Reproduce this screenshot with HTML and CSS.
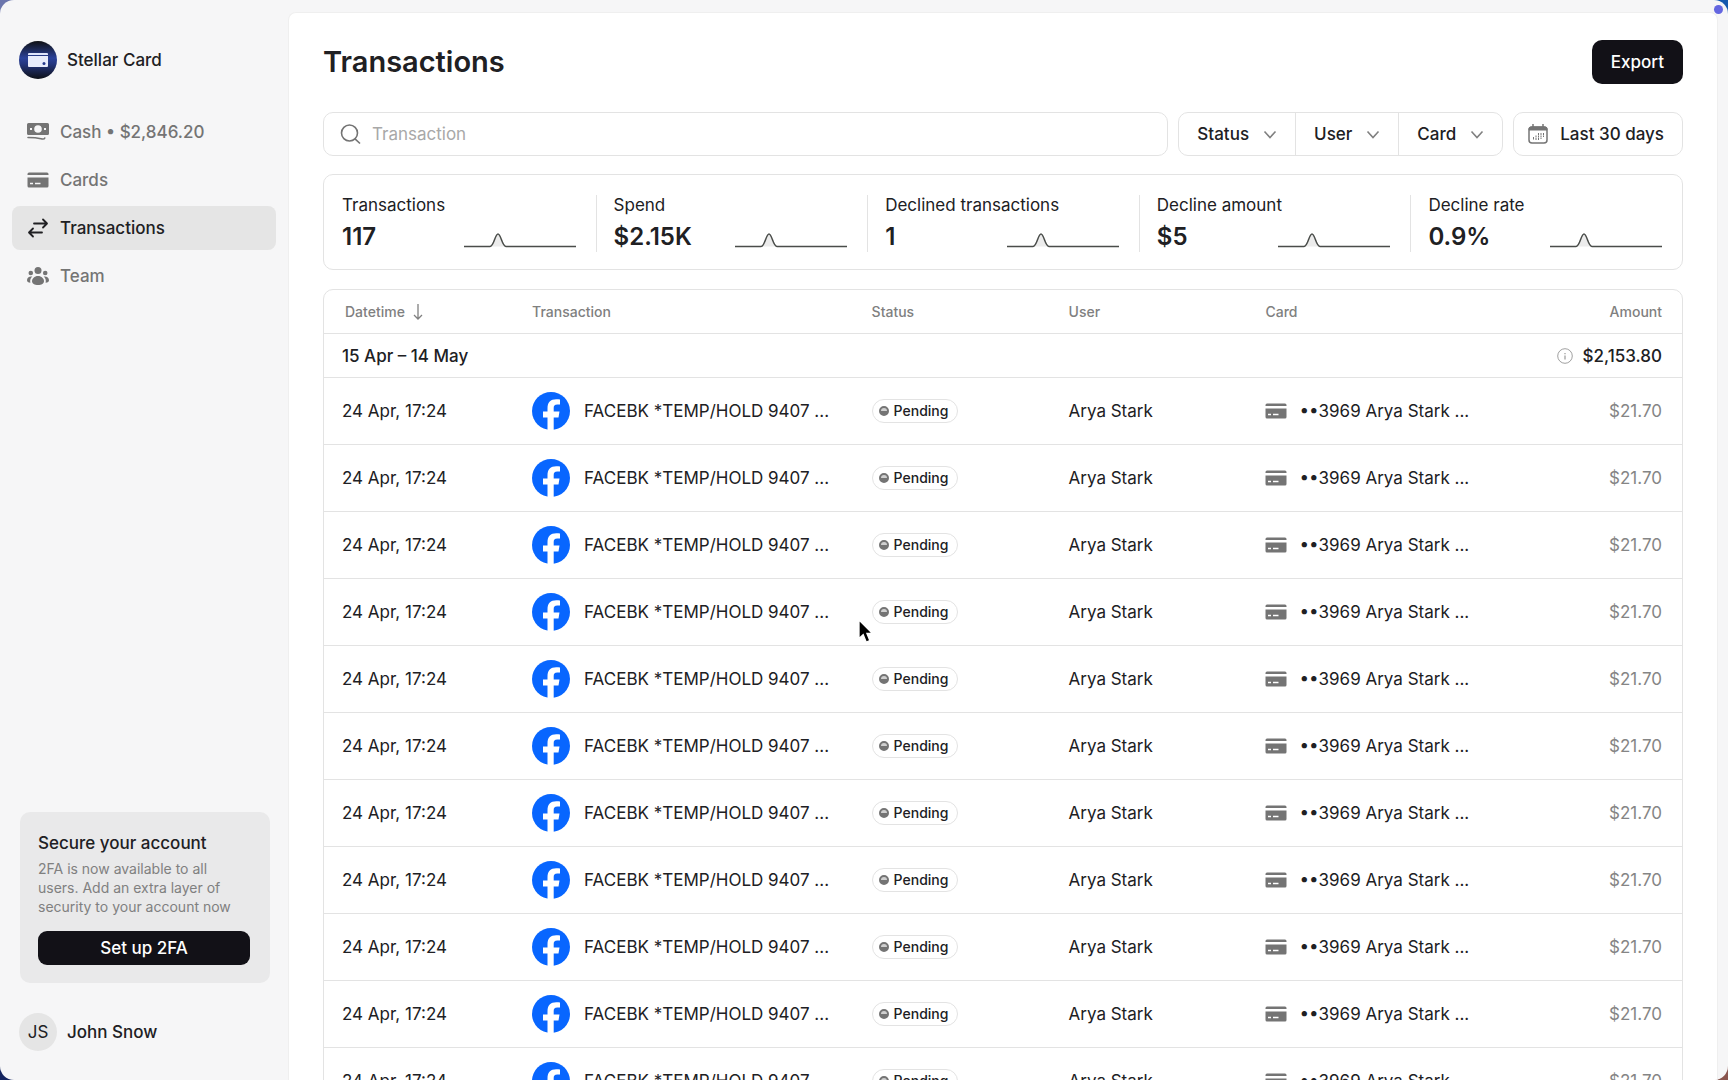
FILE: index.html
```html
<!DOCTYPE html>
<html lang="en">
<head>
    <meta charset="UTF-8">
    <meta name="viewport" content="width=device-width, initial-scale=1.0">
    <title>Transactions - Stellar Card</title>
    <link rel="stylesheet" href="styles.css">
</head>
<body>
    <!-- Shared icons -->
    <svg class="sprite" width="0" height="0" aria-hidden="true">
        <symbol id="icon-card" viewBox="0 0 22 16">
            <path d="M2 0.5h18a1.5 1.5 0 0 1 1.5 1.5v1H0.5V2A1.5 1.5 0 0 1 2 0.5z"/>
            <path fill-rule="evenodd" d="M0.5 5.5h21v8.500a1.500 1.500 0 0 1-1.500 1.500H2A1.500 1.500 0 0 1 0.500 14zM3 10.800v1.500h3v-1.500zM8 10.800v1.500h5.500v-1.500z"/>
        </symbol>
        <symbol id="icon-chevron" viewBox="0 0 14 14">
            <path d="M1.500 4.500l5.500 6 5.500-6" fill="none" stroke="currentColor" stroke-width="1.600"/>
        </symbol>
        <symbol id="icon-facebook" viewBox="0 0 38 38">
            <circle cx="19" cy="19" r="19" fill="#0866ff"/>
            <path d="M15.500 38V25.500H11V19.500h4.500v-3.300c0-6 3-9 8.800-9 1.300 0 2.700.2 3.700.4v5h-2.700c-2.800 0-3.600 1.200-3.600 3.500v3.400H27.500l-1 6h-4.800V38z" fill="#fff"/>
        </symbol>
        <symbol id="icon-spark" viewBox="0 0 112 16">
            <path d="M26 14.500C30 14.500 31 2 34 2s4 12.500 8 12.500z" fill="#ececec"/>
            <path d="M0 14.500H26C30 14.500 31 2 34 2s4 12.500 8 12.500H112" fill="none" stroke="#4a4d4a" stroke-width="1.500"/>
        </symbol>
    </svg>

    <div class="app">
        <aside class="sidebar">
            <div class="brand">
                <span class="brand-logo">
                    <svg width="20" height="14" viewBox="0 0 20 14">
                        <path d="M1 0h18a1 1 0 0 1 1 1v1H0V1a1 1 0 0 1 1-1z" fill="#dfe5fb"/>
                        <path d="M0 3h20v10a1 1 0 0 1-1 1H1a1 1 0 0 1-1-1z" fill="#e8ecfb"/>
                        <circle cx="16" cy="10.500" r="1.500" fill="#25398c"/>
                    </svg>
                </span>
                <span>Stellar Card</span>
            </div>

            <nav class="menu">
                <a href="#cash" class="menu-item">
                    <svg width="22" height="18" viewBox="0 0 22 18" fill="currentColor">
                        <path fill-rule="evenodd" d="M1.500 0h19A1.500 1.500 0 0 1 22 1.500v9a1.500 1.500 0 0 1-1.500 1.500h-19A1.500 1.500 0 0 1 0 10.500v-9A1.500 1.500 0 0 1 1.500 0zM11 2.200a3.800 3.800 0 1 0 0 7.600 3.800 3.800 0 0 0 0-7.600zM3 5v2h2V5zM17 5v2h2V5z"/>
                        <path d="M1 14.500c5 0 9 .3 13 1.300 2 .5 3.300.7 3.800-.8" fill="none" stroke="currentColor" stroke-width="1.600" stroke-linecap="round"/>
                    </svg>
                    <span>Cash • $2,846.20</span>
                </a>
                <a href="#cards" class="menu-item">
                    <svg width="22" height="16" fill="currentColor"><use href="#icon-card"/></svg>
                    <span>Cards</span>
                </a>
                <a href="#transactions" class="menu-item active">
                    <svg width="22" height="20" viewBox="0 0 22 20" fill="none" stroke="currentColor" stroke-width="1.800" stroke-linecap="round" stroke-linejoin="round">
                        <path d="M7 5.500h12.500M16 1.500l4 4-4 4M15 14.500H2.500M6 10.500l-4 4 4 4"/>
                    </svg>
                    <span>Transactions</span>
                </a>
                <a href="#team" class="menu-item">
                    <svg width="22" height="18" viewBox="0 0 22 18" fill="currentColor">
                        <circle cx="11" cy="3.500" r="3.500"/>
                        <circle cx="3.800" cy="6" r="2.300"/>
                        <circle cx="18.200" cy="6" r="2.300"/>
                        <path d="M11 9c3.600 0 6 2.600 6 5.300C17 16.700 14.500 18 11 18s-6-1.300-6-3.700C5 11.600 7.400 9 11 9z"/>
                        <path d="M5.300 9.600C2.300 9 0 10.900 0 13.300c0 1.500 1.200 2.300 3.400 2.500-.7-2.400.1-4.700 1.900-6.200z"/>
                        <path d="M16.700 9.600c3-.6 5.300 1.300 5.300 3.700 0 1.500-1.200 2.300-3.400 2.500.7-2.400-.1-4.700-1.900-6.200z"/>
                    </svg>
                    <span>Team</span>
                </a>
            </nav>

            <section class="secure">
                <h2>Secure your account</h2>
                <p>2FA is now available to all users. Add an extra layer of security to your account now</p>
                <button type="button">Set up 2FA</button>
            </section>

            <div class="profile">
                <span class="avatar">JS</span>
                <span>John Snow</span>
            </div>
        </aside>

        <main class="content">
            <header class="page-header">
                <h1>Transactions</h1>
                <button type="button" class="export">Export</button>
            </header>

            <div class="filters">
                <label class="search">
                    <svg width="22" height="22" viewBox="0 0 22 22" fill="none" stroke="#747474" stroke-width="1.600">
                        <circle cx="9.500" cy="10" r="8"/>
                        <path d="M15 15.800L20 20.500"/>
                    </svg>
                    <input type="text" placeholder="Transaction" aria-label="Search transaction">
                </label>
                <div class="filter-group">
                    <button type="button">Status <svg width="14" height="14"><use href="#icon-chevron"/></svg></button>
                    <button type="button">User <svg width="14" height="14"><use href="#icon-chevron"/></svg></button>
                    <button type="button">Card <svg width="14" height="14"><use href="#icon-chevron"/></svg></button>
                </div>
                <button type="button" class="period">
                    <svg width="20" height="20" viewBox="0 0 20 20" fill="none" stroke="#747474">
                        <rect x="1" y="3" width="18" height="16" rx="3" stroke-width="1.500"/>
                        <path d="M1 6V5a2 2 0 0 1 2-2h14a2 2 0 0 1 2 2v1z" fill="#747474"/>
                        <path d="M5 0v4M15 0v4" stroke-width="1.500"/>
                        <path d="M5.500 13v3M8 11.500V16M10.500 9v7M13 9v6M15.500 9v4" stroke-dasharray="2 .5"/>
                    </svg>
                    Last 30 days
                </button>
            </div>

            <section class="stats">
                <div class="stat">
                    <span>Transactions</span>
                    <div class="stat-row"><strong>117</strong><svg width="112" height="16"><use href="#icon-spark"/></svg></div>
                </div>
                <div class="stat">
                    <span>Spend</span>
                    <div class="stat-row"><strong>$2.15K</strong><svg width="112" height="16"><use href="#icon-spark"/></svg></div>
                </div>
                <div class="stat">
                    <span>Declined transactions</span>
                    <div class="stat-row"><strong>1</strong><svg width="112" height="16"><use href="#icon-spark"/></svg></div>
                </div>
                <div class="stat">
                    <span>Decline amount</span>
                    <div class="stat-row"><strong>$5</strong><svg width="112" height="16"><use href="#icon-spark"/></svg></div>
                </div>
                <div class="stat">
                    <span>Decline rate</span>
                    <div class="stat-row"><strong>0.9%</strong><svg width="112" height="16"><use href="#icon-spark"/></svg></div>
                </div>
            </section>

            <div class="table-box">
                <table>
                    <thead>
                        <tr>
                            <th class="col-date">
                                <span class="cell">Datetime
                                    <svg width="10" height="16" viewBox="0 0 10 16" fill="none" stroke="currentColor" stroke-width="1.300"><path d="M5 0v15M1 11l4 4 4-4"/></svg>
                                </span>
                            </th>
                            <th class="col-name">Transaction</th>
                            <th class="col-status">Status</th>
                            <th class="col-user">User</th>
                            <th>Card</th>
                            <th class="amount">Amount</th>
                        </tr>
                        <tr class="total">
                            <td colspan="4">15 Apr – 14 May</td>
                            <td colspan="2" class="amount">
                                <span class="cell sum">
                                    <svg width="16" height="16" viewBox="0 0 16 16" fill="none" stroke="#a0a0a0"><circle cx="8" cy="8" r="7.300"/><path d="M8 7.500v4M8 5v1.300" stroke-width="1.300"/></svg>
                                    $2,153.80
                                </span>
                            </td>
                        </tr>
                    </thead>
                    <tbody id="rows"></tbody>
                </table>
            </div>
        </main>

        <span class="record-dot"></span>
        <svg class="cursor" width="16" height="26" viewBox="0 0 16 26">
            <path d="M1 1v18.500l4.200-3.800L8.200 23l3.600-1.500L8.900 14.500h5.600z" fill="#000" stroke="#fff" stroke-width="1.300"/>
        </svg>
    </div>

    <script>
        var transactions = [];
        for (var i = 0; i < 11; i++) {
            transactions.push({
                date: '24 Apr, 17:24',
                name: 'FACEBK *TEMP/HOLD 9407 ...',
                status: 'Pending',
                user: 'Arya Stark',
                card: '••3969 Arya Stark ...',
                amount: '$21.70'
            });
        }

        document.getElementById('rows').innerHTML = transactions.map(function (t) {
            return '<tr>' +
                '<td>' + t.date + '</td>' +
                '<td><span class="cell merchant"><svg width="38" height="38"><use href="#icon-facebook"/></svg>' + t.name + '</span></td>' +
                '<td><span class="badge"><i></i>' + t.status + '</span></td>' +
                '<td>' + t.user + '</td>' +
                '<td><span class="cell card"><svg width="22" height="16" fill="#747474"><use href="#icon-card"/></svg>' + t.card + '</span></td>' +
                '<td class="amount">' + t.amount + '</td>' +
                '</tr>';
        }).join('');
    </script>
</body>
</html>
```
FILE: styles.css
```css
* {
    box-sizing: border-box;
}

body {
    margin: 0;
    font-family: Inter, "Liberation Sans", sans-serif;
    font-size: 17px;
    line-height: 20px;
    color: #202023;
    background: linear-gradient(to right, #6c76ad 50%, #1459ae 50%) top / 100% 50% no-repeat,
                linear-gradient(to right, #14245f 50%, #8a554e 50%) bottom / 100% 50% no-repeat;
}

h1, h2, p {
    margin: 0;
}

button, input {
    font: inherit;
    color: inherit;
}

button {
    cursor: pointer;
}

svg {
    flex-shrink: 0;
}

.sprite {
    position: absolute;
}

.app {
    position: relative;
    display: flex;
    height: 100vh;
    padding: 12px 10px 0 0;
    overflow: hidden;
    background: #f6f6f7;
    border-radius: 14px;
}

/* Sidebar */
.sidebar {
    display: flex;
    flex-direction: column;
    flex-shrink: 0;
    width: 288px;
    padding: 29px 12px;
}

.brand,
.profile {
    display: flex;
    align-items: center;
    gap: 10px;
    padding: 0 7px;
    font-weight: 500;
}

.brand-logo,
.avatar {
    display: flex;
    align-items: center;
    justify-content: center;
    width: 38px;
    height: 38px;
    border-radius: 50%;
}

.brand-logo {
    background: linear-gradient(#101114, #2b429a 45%, #24367f 60%, #0e1017);
}

.avatar {
    background: #e5e5e5;
    font-weight: 400;
}

.menu {
    display: flex;
    flex-direction: column;
    gap: 4px;
    margin-top: 31px;
}

.menu-item {
    display: flex;
    align-items: center;
    gap: 11px;
    height: 44px;
    padding: 0 15px;
    border-radius: 8px;
    font-weight: 500;
    color: #747474;
    text-decoration: none;
}

.menu-item.active {
    background: #e5e5e5;
    color: #202023;
}

.secure {
    margin: auto 6px 30px 8px;
    padding: 20px 20px 18px 18px;
    border-radius: 10px;
    background: #e9e9ea;
}

.secure h2 {
    font-size: 17px;
    font-weight: 500;
    line-height: 22px;
}

.secure p {
    margin-top: 5px;
    padding-right: 10px;
    font-size: 14px;
    line-height: 19px;
    color: #808080;
}

.secure button {
    width: 100%;
    height: 34px;
    margin-top: 15px;
    padding: 0;
    border: none;
    border-radius: 9px;
    background: #121117;
    color: #fff;
    font-weight: 500;
}

/* Main panel */
.content {
    flex: 1;
    min-width: 0;
    padding: 27px 34px 0;
    overflow: hidden;
    background: #fff;
    border: 1px solid #efefef;
    border-bottom: none;
    border-radius: 8px 8px 0 0;
}

.page-header {
    display: flex;
    align-items: center;
    justify-content: space-between;
}

h1 {
    font-size: 29px;
    font-weight: 600;
    line-height: 36px;
}

.export {
    height: 44px;
    padding: 0 19px;
    border: none;
    border-radius: 10px;
    background: #121117;
    color: #fff;
    font-weight: 500;
}

.filters {
    display: flex;
    gap: 10px;
    margin-top: 28px;
}

.search,
.filter-group,
.period {
    display: flex;
    align-items: center;
    height: 44px;
    border: 1px solid #e3e3e3;
    border-radius: 10px;
    background: #fff;
}

.search {
    flex: 1;
    gap: 10px;
    padding: 0 16px;
}

.search input {
    flex: 1;
    padding: 0;
    border: none;
    outline: none;
    background: none;
}

.search input::placeholder {
    color: #a8a8a8;
}

.filter-group button {
    display: flex;
    align-items: center;
    gap: 14px;
    height: 100%;
    padding: 0 18px;
    border: none;
    background: none;
    font-weight: 500;
}

.filter-group button + button {
    border-left: 1px solid #e3e3e3;
}

.filter-group svg {
    color: #808080;
}

.period {
    gap: 12px;
    padding: 0 18px 0 14px;
    font-weight: 500;
}

.stats {
    display: grid;
    grid-template-columns: repeat(5, 1fr);
    height: 96px;
    margin-top: 18px;
    padding: 20px 0;
    border: 1px solid #e3e3e3;
    border-radius: 10px;
}

.stat {
    padding: 0 20px 0 18px;
}

.stat + .stat {
    padding-left: 17px;
    border-left: 1px solid #e3e3e3;
}

.stat-row {
    display: flex;
    align-items: flex-end;
    justify-content: space-between;
    margin-top: 7px;
}

.stat-row svg {
    margin-bottom: 4px;
}

.stat strong {
    font-size: 24px;
    font-weight: 600;
    line-height: 30px;
}

/* Table */
.table-box {
    margin-top: 19px;
    border: 1px solid #e3e3e3;
    border-radius: 10px;
}

table {
    width: 100%;
    table-layout: fixed;
    border-collapse: separate;
    border-spacing: 0;
}

.col-date {
    width: 14%;
}

.col-name {
    width: 25%;
}

.col-status,
.col-user {
    width: 14.5%;
}

th, td {
    height: 67px;
    padding: 0 18px;
    border-bottom: 1px solid #e3e3e3;
    text-align: left;
    white-space: nowrap;
}

th {
    height: 44px;
    font-size: 14px;
    font-weight: 500;
    color: #808080;
}

.total td {
    height: 44px;
    font-weight: 500;
}

.cell {
    display: flex;
    align-items: center;
    gap: 8px;
}

th .cell {
    padding-left: 3px;
}

.merchant {
    gap: 14px;
}

.card {
    gap: 12px;
}

.sum {
    justify-content: flex-end;
    gap: 10px;
}

.badge {
    display: inline-flex;
    align-items: center;
    gap: 5px;
    height: 24px;
    padding: 0 9px 0 6px;
    border: 1px solid #e3e3e3;
    border-radius: 12px;
    font-size: 14px;
    font-weight: 500;
    vertical-align: middle;
}

.badge i {
    width: 10px;
    height: 10px;
    border: 2px solid #747474;
    border-radius: 50%;
    background: linear-gradient(#d0d0d0 50%, #747474 50%);
}

th.amount,
td.amount {
    padding-right: 20px;
    text-align: right;
}

tbody .amount {
    color: #858585;
}

/* Recorder overlay */
.record-dot {
    position: absolute;
    top: 5px;
    right: 5px;
    width: 9px;
    height: 9px;
    border-radius: 50%;
    background: #6466e0;
}

.cursor {
    position: absolute;
    top: 619px;
    left: 858px;
}
```
